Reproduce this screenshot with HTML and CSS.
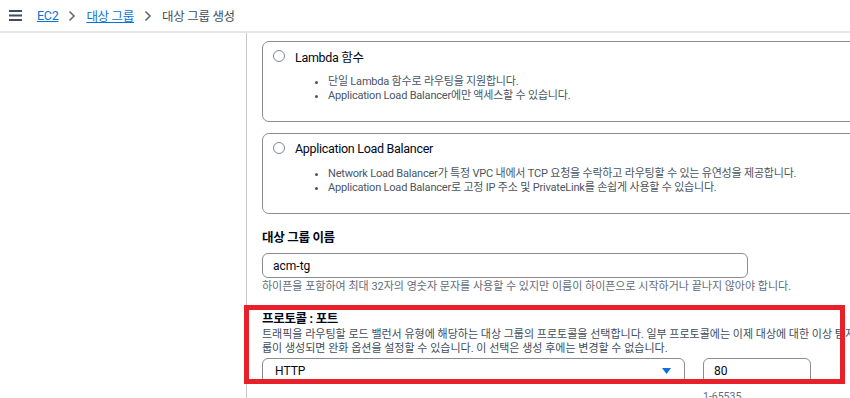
FILE: index.html
```html
<!DOCTYPE html>
<html lang="ko">
  <head>
    <meta charset="UTF-8" />
    <meta name="viewport" content="width=device-width, initial-scale=1.0" />
    <title>대상 그룹 생성</title>
    <link rel="stylesheet" href="styles.css">
  </head>
  <body>
    <header class="topbar">
      <span class="menu-icon">
        <svg width="13" height="11" viewBox="0 0 13 11">
          <rect x="0" y="0" width="13" height="2" fill="#414d5c" />
          <rect x="0" y="4.5" width="13" height="2" fill="#414d5c" />
          <rect x="0" y="9" width="13" height="2" fill="#414d5c" />
        </svg>
      </span>
      <nav class="breadcrumbs">
        <a href="#">EC2</a>
        <svg class="chevron" width="8" height="12" viewBox="0 0 8 12">
          <path d="M1.5 1.5 L6 6 L1.5 10.5" fill="none" stroke="#5f6b7a" stroke-width="1.6" />
        </svg>
        <a href="#">대상 그룹</a>
        <svg class="chevron" width="8" height="12" viewBox="0 0 8 12">
          <path d="M1.5 1.5 L6 6 L1.5 10.5" fill="none" stroke="#5f6b7a" stroke-width="1.6" />
        </svg>
        <span class="current">대상 그룹 생성</span>
      </nav>
    </header>

    <div class="layout">
      <aside class="side"></aside>

      <main class="main">
        <div class="option-card">
          <div class="option-head">
            <span class="radio"></span>
            <span class="option-title">Lambda 함수</span>
          </div>
          <ul class="option-list">
            <li>단일 Lambda 함수로 라우팅을 지원합니다.</li>
            <li>Application Load Balancer에만 액세스할 수 있습니다.</li>
          </ul>
        </div>

        <div class="option-card">
          <div class="option-head">
            <span class="radio"></span>
            <span class="option-title">Application Load Balancer</span>
          </div>
          <ul class="option-list">
            <li>Network Load Balancer가 특정 VPC 내에서 TCP 요청을 수락하고 라우팅할 수 있는 유연성을 제공합니다.</li>
            <li>Application Load Balancer로 고정 IP 주소 및 PrivateLink를 손쉽게 사용할 수 있습니다.</li>
          </ul>
        </div>

        <div class="field name-field">
          <label class="field-label" for="tg-name">대상 그룹 이름</label>
          <input class="text-input name-input" id="tg-name" type="text" value="acm-tg" />
          <p class="field-hint">하이픈을 포함하여 최대 32자의 영숫자 문자를 사용할 수 있지만 이름이 하이픈으로 시작하거나 끝나지 않아야 합니다.</p>
        </div>

        <div class="field protocol-field">
          <div class="field-label">프로토콜 : 포트</div>
          <p class="field-desc">트래픽을 라우팅할 로드 밸런서 유형에 해당하는 대상 그룹의 프로토콜을 선택합니다. 일부 프로토콜에는 이제 대상에 대한 이상 탐지 기능이 포함되며, 대상 그룹이 생성되면 완화 옵션을 설정할 수 있습니다. 이 선택은 생성 후에는 변경할 수 없습니다.</p>
          <div class="protocol-row">
            <div class="select">
              <span>HTTP</span>
              <svg width="9" height="6" viewBox="0 0 9 6">
                <path d="M0 0 H9 L4.5 6 Z" fill="#0972d3" />
              </svg>
            </div>
            <div class="port-col">
              <input class="text-input port-input" type="text" value="80" />
              <span class="port-hint">1-65535</span>
            </div>
          </div>
        </div>
      </main>
    </div>

    <div class="highlight"></div>
  </body>
</html>
```

FILE: styles.css
```css
/* page */
body {
  margin: 0;
  height: 398px;
  overflow: hidden;
  background: #fff;
  color: #000716;
  font-family: Roboto, "Noto Sans CJK KR", sans-serif;
}

/* top bar */
.topbar {
  height: 33px;
  display: flex;
  align-items: center;
  border-bottom: 2px solid #e3e5e8;
  padding-left: 9px;
  box-sizing: border-box;
}

.menu-icon {
  display: flex;
  margin-right: 15px;
}

.breadcrumbs {
  display: flex;
  align-items: center;
  font-size: 12.5px;
  letter-spacing: -0.3px;
}

.breadcrumbs a {
  color: #0972d3;
  text-decoration: underline;
}

.breadcrumbs .chevron {
  margin: 0 10px;
}

.breadcrumbs .current {
  color: #414d5c;
}

/* layout */
.layout {
  display: flex;
  height: 365px;
  overflow: hidden;
}

.side {
  width: 246px;
  flex: none;
  border-right: 1px solid #c6c6cd;
}

.main {
  flex: none;
  width: 700px;
  padding: 8px 0 0 15px;
}

/* option cards */
.option-card {
  border: 1px solid #8c8c94;
  border-radius: 7px;
  height: 81px;
  margin-bottom: 11px;
  box-sizing: border-box;
  padding: 7px 10px;
}

.option-head {
  display: flex;
  align-items: center;
  height: 14px;
}

.radio {
  width: 10px;
  height: 10px;
  border: 1.5px solid #7d8998;
  border-radius: 50%;
  margin-right: 10px;
}

.option-title {
  font-size: 12.5px;
  letter-spacing: -0.3px;
}

.option-list {
  margin: 12px 0 0 0;
  padding-left: 55px;
  font-size: 11px;
  line-height: 14px;
  color: #4b5563;
  letter-spacing: -0.2px;
}

/* fields */
.field {
  margin-top: 16px;
}

.field-label {
  display: block;
  font-size: 12.5px;
  line-height: 16px;
  font-weight: bold;
  letter-spacing: -0.3px;
}

.text-input {
  font-family: inherit;
  font-size: 12px;
  color: #000716;
  border: 1px solid #8c8c94;
  border-radius: 6px;
  box-sizing: border-box;
  height: 25px;
  padding: 0 10px;
  outline: none;
}

.name-input {
  display: block;
  width: 486px;
  margin-top: 7px;
}

.field-hint {
  margin: 2px 0 0;
  font-size: 11px;
  line-height: 14px;
  color: #5f6b7a;
  letter-spacing: 0;
}

.protocol-field {
  margin-top: 17px;
}

.field-desc {
  margin: 1px 0 0;
  width: 712px;
  font-size: 11px;
  line-height: 14px;
  color: #414d5c;
  letter-spacing: 0;
}

.protocol-row {
  display: flex;
  margin-top: 2px;
}

.select {
  width: 423px;
  height: 26px;
  border: 1px solid #8c8c94;
  border-radius: 6px;
  box-sizing: border-box;
  display: flex;
  align-items: center;
  justify-content: space-between;
  padding: 0 13px 0 12px;
  font-size: 12px;
}

.port-col {
  margin-left: 18px;
  display: flex;
  flex-direction: column;
}

.port-input {
  width: 108px;
  height: 26px;
}

.port-hint {
  margin-top: 7px;
  font-size: 10.5px;
  line-height: 12px;
  color: #5f6b7a;
}

/* red annotation box */
.highlight {
  position: absolute;
  left: 244px;
  top: 305px;
  width: 601px;
  height: 79px;
  box-sizing: border-box;
  border: 5px solid #e8202a;
}
```
